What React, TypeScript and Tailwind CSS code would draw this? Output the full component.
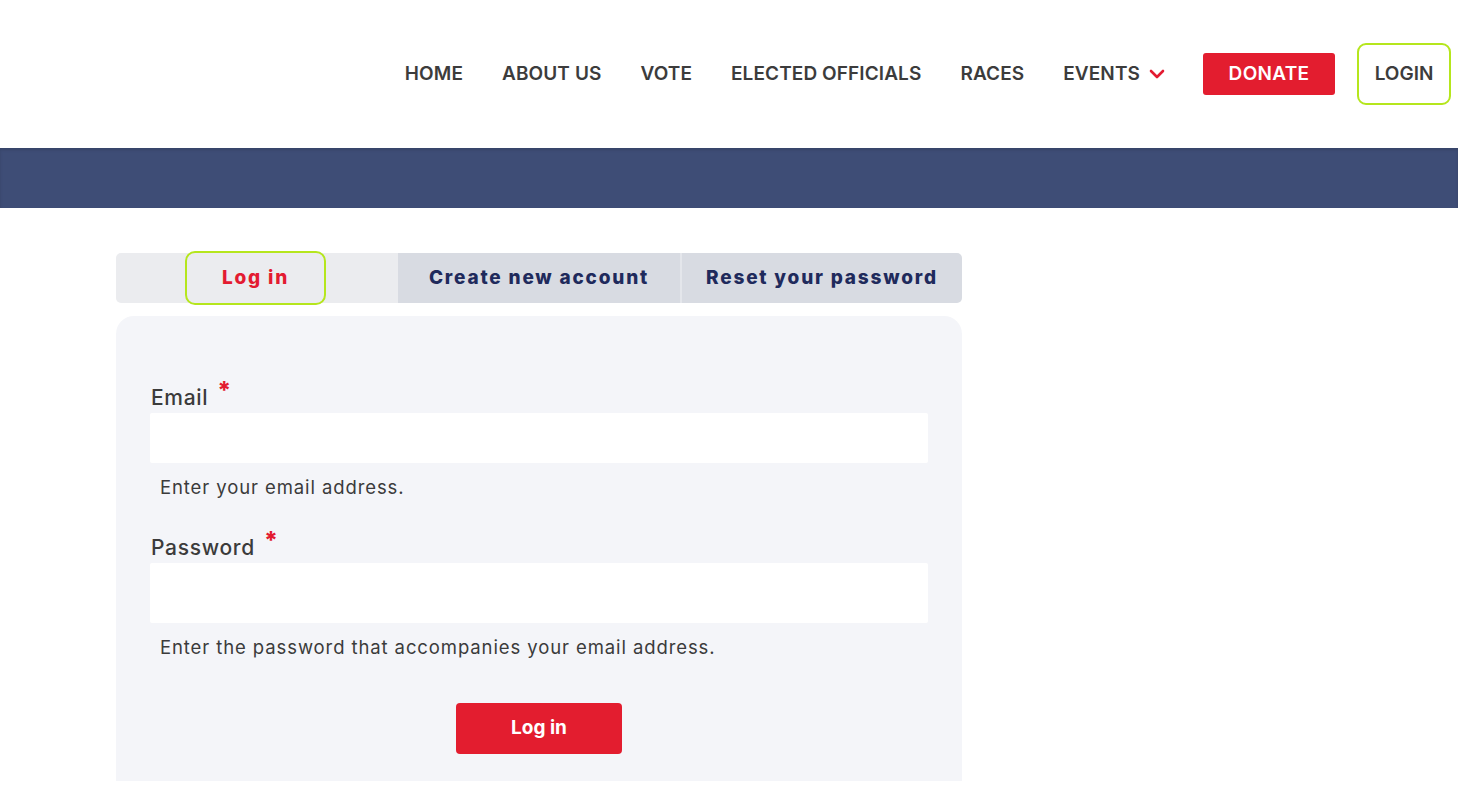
import { ChevronDown } from "lucide-react";

const navItems = ["HOME", "ABOUT US", "VOTE", "ELECTED OFFICIALS", "RACES"];

function Header() {
  return (
    <header className="flex h-[148px] items-center justify-end bg-white pr-[7px]">
      <nav className="flex items-center">
        <ul className="flex items-center gap-[39px] text-[19px] font-semibold tracking-[0.1px] text-[#3c3c3c]">
          {navItems.map((item) => (
            <li key={item}>
              <a href="#" className="whitespace-nowrap">
                {item}
              </a>
            </li>
          ))}
          <li>
            <a href="#" className="flex items-center gap-[5px] whitespace-nowrap">
              EVENTS
              <ChevronDown className="h-[24px] w-[24px] text-[#e31b31]" strokeWidth={2.6} />
            </a>
          </li>
        </ul>
        <a
          href="#"
          className="ml-[34px] flex h-[42px] w-[132px] items-center justify-center rounded-[3px] bg-[#e31d2f] text-[19px] font-semibold tracking-[0.3px] text-white"
        >
          DONATE
        </a>
        <a
          href="#"
          className="ml-[22px] flex h-[62px] w-[94px] items-center justify-center rounded-[9px] border-2 border-[#b5e61d] text-[19px] font-semibold text-[#3c3c3c]"
        >
          LOGIN
        </a>
      </nav>
    </header>
  );
}

function Field({
  label,
  help,
  type,
  height,
}: {
  label: string;
  help: string;
  type: string;
  height: string;
}) {
  return (
    <div className="flex flex-col">
      <label className="flex h-[30px] items-center pl-[1px] text-[21px] font-medium tracking-[0.7px] text-[#3b3b3b]">
        {label}
        <span className="relative -top-[7px] ml-[9px] text-[24px] font-extrabold leading-none text-[#e31b31]">*</span>
      </label>
      <input type={type} className={`w-full rounded-[2px] bg-white px-3 outline-none ${height}`} />
      <p className="mt-[11px] pl-[10px] text-[18.5px] leading-[26px] tracking-[0.9px] text-[#3b3b3b]">{help}</p>
    </div>
  );
}

export default function App() {
  return (
    <div className="min-h-screen bg-white font-['Inter','Liberation_Sans',sans-serif]">
      <Header />
      <div className="h-[60px] bg-[#3e4d76] shadow-[inset_0_2px_3px_rgba(0,0,0,0.12)]" />

      <main className="box-content w-[846px] pl-[116px] pt-[45px]">
        <div className="grid grid-cols-3 text-[19px] font-extrabold tracking-[1.8px]">
          <div className="flex h-[50px] items-center justify-center rounded-l-[5px] bg-[#ebecef] pr-[3px]">
            <a
              href="#"
              className="flex h-[54px] w-[141px] shrink-0 items-center justify-center rounded-[10px] border-2 border-[#b5e61d] text-[#e31b31]"
            >
              Log in
            </a>
          </div>
          <a href="#" className="flex h-[50px] items-center justify-center bg-[#d8dbe2] text-[#1f2a5c]">
            Create new account
          </a>
          <a
            href="#"
            className="flex h-[50px] items-center justify-center rounded-r-[5px] border-l-2 border-[#e4e6eb] bg-[#d8dbe2] text-[#1f2a5c]"
          >
            Reset your password
          </a>
        </div>

        <form className="mt-[13px] rounded-t-[18px] bg-[#f4f5f9] px-[34px] pb-[27px] pt-[67px]">
          <div className="flex flex-col gap-[33px]">
            <Field label="Email" help="Enter your email address." type="email" height="h-[50px]" />
            <Field
              label="Password"
              help="Enter the password that accompanies your email address."
              type="password"
              height="h-[60px]"
            />
          </div>
          <div className="mt-[43px] flex justify-center">
            <button
              type="submit"
              className="h-[51px] w-[166px] rounded-[4px] bg-[#e31d2f] text-[19px] font-bold text-white"
            >
              Log in
            </button>
          </div>
        </form>
      </main>
    </div>
  );
}
